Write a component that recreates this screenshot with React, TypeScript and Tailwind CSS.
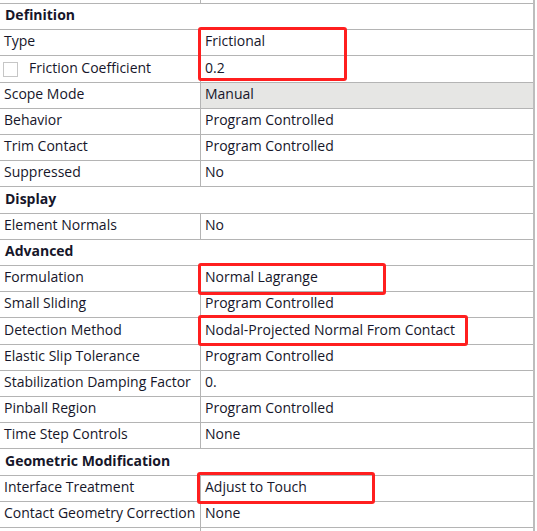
type Row =
  | { kind: "header"; label: string; h: number }
  | { kind: "prop"; label: string; value: string; h: number; check?: boolean; shaded?: boolean };

// row heights follow the screenshot's grid lines (26.2px pitch)
const ROWS: Row[] = [
  { kind: "header", label: "Definition", h: 26 },
  { kind: "prop", label: "Type", value: "Frictional", h: 26 },
  { kind: "prop", label: "Friction Coefficient", value: "0.2", h: 27, check: true },
  { kind: "prop", label: "Scope Mode", value: "Manual", h: 26, shaded: true },
  { kind: "prop", label: "Behavior", value: "Program Controlled", h: 26 },
  { kind: "prop", label: "Trim Contact", value: "Program Controlled", h: 26 },
  { kind: "prop", label: "Suppressed", value: "No", h: 26 },
  { kind: "header", label: "Display", h: 27 },
  { kind: "prop", label: "Element Normals", value: "No", h: 26 },
  { kind: "header", label: "Advanced", h: 26 },
  { kind: "prop", label: "Formulation", value: "Normal Lagrange", h: 26 },
  { kind: "prop", label: "Small Sliding", value: "Program Controlled", h: 26 },
  { kind: "prop", label: "Detection Method", value: "Nodal-Projected Normal From Contact", h: 27 },
  { kind: "prop", label: "Elastic Slip Tolerance", value: "Program Controlled", h: 26 },
  { kind: "prop", label: "Stabilization Damping Factor", value: "0.", h: 26 },
  { kind: "prop", label: "Pinball Region", value: "Program Controlled", h: 26 },
  { kind: "prop", label: "Time Step Controls", value: "None", h: 26 },
  { kind: "header", label: "Geometric Modification", h: 27 },
  { kind: "prop", label: "Interface Treatment", value: "Adjust to Touch", h: 26 },
  { kind: "prop", label: "Contact Geometry Correction", value: "None", h: 26 },
];

const HIGHLIGHTS = [
  "left-[198px] top-[27px] w-[149px] h-[54px]",
  "left-[198px] top-[263px] w-[188px] h-[32px]",
  "left-[198px] top-[315px] w-[270px] h-[31px]",
  "left-[197px] top-[472px] w-[178px] h-[32px]",
];

function PropRow({ row }: { row: Row }) {
  const style = { height: row.h };
  if (row.kind === "header") {
    return (
      <div style={style} className="flex items-center border-t border-[#b4b4b4] pb-[3px] pl-[5px] font-bold">
        {row.label}
      </div>
    );
  }
  return (
    <div style={style} className="flex border-t border-[#b4b4b4]">
      <div className="flex w-[201px] shrink-0 items-center border-r border-[#b4b4b4] pb-[3px] pl-[4px] whitespace-nowrap">
        {row.check && (
          <span className="mt-[3px] mr-[11px] ml-[-1px] inline-block h-[15px] w-[15px] border border-[#c6c6c6] bg-white" />
        )}
        {row.label}
      </div>
      <div
        className={`flex flex-1 items-center pb-[3px] pl-[4px] whitespace-nowrap ${
          row.shaded ? "bg-[#e6e6e4]" : ""
        }`}
      >
        {row.value}
      </div>
    </div>
  );
}

export default function App() {
  return (
    <div className="relative h-[531px] w-[537px] overflow-hidden bg-white">
      <div
        className="w-[535px] border-r-2 border-[#bdbdbd] text-[14px] leading-none text-[#16162a]"
        style={{ fontFamily: '"Open Sans", "Noto Sans", sans-serif' }}
      >
        {/* partial row cut off at the top */}
        <div className="flex h-[3px]">
          <div className="w-[201px] border-r border-[#b4b4b4]" />
        </div>
        {ROWS.map((row) => (
          <PropRow key={row.label} row={row} />
        ))}
        {/* partial row cut off at the bottom */}
        <div className="flex h-[4px] border-t border-[#b4b4b4]">
          <div className="w-[201px] border-r border-[#b4b4b4]" />
        </div>
      </div>

      {/* red annotation boxes */}
      {HIGHLIGHTS.map((cls) => (
        <div key={cls} className={`pointer-events-none absolute rounded-[3px] border-[3px] border-[#ff1f1f] ${cls}`} />
      ))}
    </div>
  );
}
